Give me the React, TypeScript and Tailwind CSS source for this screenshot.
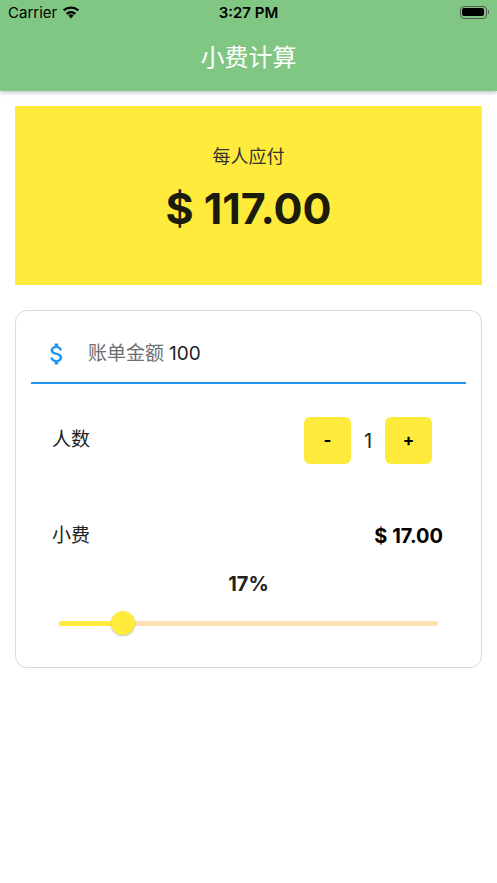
import { useState } from "react";

const font = { fontFamily: '"Inter", "Noto Sans CJK SC", sans-serif' };

function StatusBar() {
  return (
    <div className="relative flex h-[24px] items-center px-[8px] text-black">
      <div className="flex items-center gap-[5px]">
        <span className="text-[15px] leading-none">Carrier</span>
        <svg width="18" height="13" viewBox="0 0 18 13">
          <path d="M9 12.5l2.6-3.1a4 4 0 0 0-5.2 0z" fill="#000" />
          <path d="M3.9 6.9l1.5 1.8a5.6 5.6 0 0 1 7.2 0l1.5-1.8a8 8 0 0 0-10.2 0z" fill="#000" />
          <path d="M.9 3.4l1.5 1.8a10.3 10.3 0 0 1 13.2 0l1.5-1.8a12.7 12.7 0 0 0-16.2 0z" fill="#000" />
        </svg>
      </div>
      <span className="absolute left-1/2 -translate-x-1/2 text-[15px] font-semibold leading-none">3:27 PM</span>
      <div className="ml-auto flex items-center">
        <div className="h-[13px] w-[27px] rounded-[4px] border border-[#555] p-[1.5px]">
          <div className="h-full w-full rounded-[2px] bg-black" />
        </div>
        <div className="ml-[1px] h-[4px] w-[1.5px] rounded-r bg-[#555]" />
      </div>
    </div>
  );
}

export default function App() {
  const [people, setPeople] = useState(1);
  const bill = 100;
  const tip = 17;
  const tipAmount = (bill * tip) / 100;
  const perPerson = (bill + tipAmount) / people;

  return (
    <div className="min-h-[883px] bg-white" style={font}>
      <div className="bg-[#81c784] shadow-[0_2px_4px_rgba(0,0,0,0.22)]">
        <StatusBar />
        <div className="flex h-[67px] items-center justify-center">
          <h1 className="text-[24px] text-white">小费计算</h1>
        </div>
      </div>

      {/* per person total */}
      <div className="mx-[15px] mt-[15px] flex h-[179px] flex-col items-center bg-[#ffeb3b] pt-[39px]">
        <p className="text-[18px] leading-[24px] text-[#333]">每人应付</p>
        <p className="mt-[13px] text-[43px] font-bold leading-[52px] text-[#1c1c0c]">
          $ {perPerson.toFixed(2)}
        </p>
      </div>

      <div className="mx-[15px] mt-[25px] rounded-[12px] border border-[#d4dbe1] px-[15px] pb-[32px]">
        <div className="flex items-center border-b-2 border-[#2196f3] pt-[28px] pb-[13px]">
          <svg className="ml-[12px]" width="28" height="28" viewBox="0 0 24 24" fill="#2196f3">
            <path d="M11.8 10.9c-2.27-.59-3-1.2-3-2.15 0-1.09 1.01-1.850 2.7-1.85 1.78 0 2.44.85 2.5 2.1h2.21c-.07-1.72-1.12-3.3-3.21-3.81V3h-3v2.16c-1.94.42-3.5 1.68-3.5 3.61 0 2.31 1.91 3.46 4.7 4.13 2.5.6 3 1.48 3 2.41 0 .69-.49 1.79-2.7 1.79-2.06 0-2.87-.92-2.98-2.1h-2.2c.12 2.19 1.76 3.42 3.68 3.83V21h3v-2.15c1.95-.37 3.5-1.5 3.5-3.55 0-2.84-2.43-3.81-4.7-4.4z" />
          </svg>
          <span className="ml-[17px] text-[19px] leading-[30px] text-[#6e6e6e]">账单金额</span>
          <span className="ml-[5px] text-[19px] leading-[30px] text-[#222]">{bill}</span>
        </div>

        <div className="mt-[33px] flex items-center pl-[21px] pr-[34px]">
          <span className="text-[19px] text-[#222]">人数</span>
          <div className="ml-auto flex items-center">
            <button
              onClick={() => setPeople(Math.max(1, people - 1))}
              className="flex h-[47px] w-[47px] items-center justify-center rounded-[6px] bg-[#ffeb3b] text-[17px] font-bold text-black"
            >
              -
            </button>
            <span className="w-[34px] text-center text-[20px] text-[#222]">{people}</span>
            <button
              onClick={() => setPeople(people + 1)}
              className="flex h-[47px] w-[47px] items-center justify-center rounded-[6px] bg-[#ffeb3b] text-[17px] font-bold text-black"
            >
              +
            </button>
          </div>
        </div>

        <div className="mt-[58px] flex items-center pl-[21px] pr-[23px]">
          <span className="text-[19px] leading-[28px] text-[#222]">小费</span>
          <span className="ml-auto text-[20px] font-bold leading-[28px] text-black">
            $ {tipAmount.toFixed(2)}
          </span>
        </div>

        <p className="mt-[20px] text-center text-[20px] font-bold leading-[28px] text-[#222]">{tip}%</p>

        <div className="relative mx-[28px] mt-[13px] flex h-[24px] items-center">
          <div className="h-[5px] w-full rounded-full bg-[#ffe0b2]" />
          <div
            className="absolute left-0 h-[5px] rounded-full bg-[#ffeb3b]"
            style={{ width: `${tip}%` }}
          />
          <div
            className="absolute h-[24px] w-[24px] -translate-x-1/2 rounded-full bg-[#ffeb3b] shadow-[0_1px_2px_rgba(0,0,0,0.25)]"
            style={{ left: `${tip}%` }}
          />
        </div>
      </div>
    </div>
  );
}
